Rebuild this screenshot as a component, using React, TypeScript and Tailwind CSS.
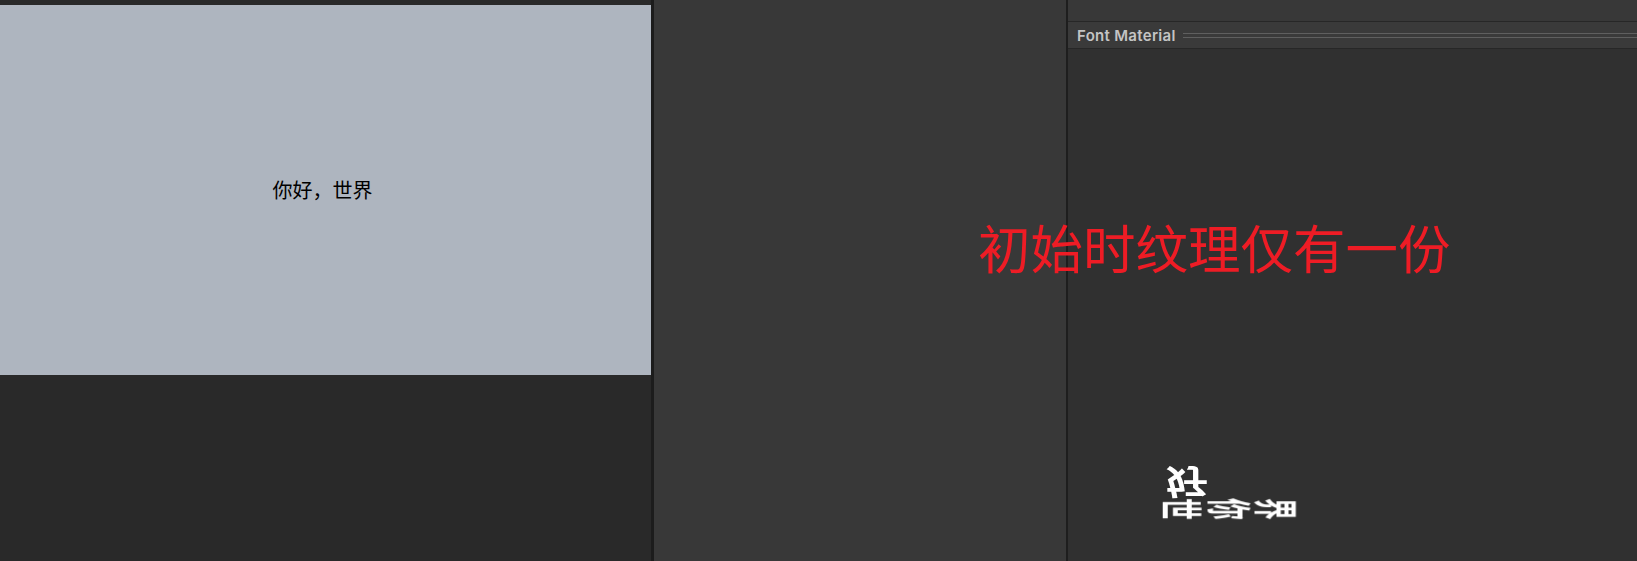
const cjk = "font-['Noto_Sans_CJK_SC','Noto_Sans_CJK_TC',sans-serif]";

function AtlasGlyph({ char, className }: { char: string; className: string }) {
  return <span className={`absolute leading-none font-bold text-white blur-[0.4px] ${cjk} ${className}`}>{char}</span>;
}

export default function App() {
  return (
    <div className="relative flex h-[561px] w-[1637px] overflow-hidden bg-[#292929]">
      {/* game view */}
      <div className="flex w-[651px] shrink-0 flex-col bg-[#292929] pt-[5px]">
        <div className="flex h-[370px] items-center justify-center bg-[#aeb5bf] pr-[6px]">
          <span className={`text-[20px] leading-none text-black ${cjk}`}>你好，世界</span>
        </div>
      </div>
      <div className="w-[3px] shrink-0 bg-[#1c1c1c]" />

      {/* middle panel */}
      <div className="w-[412px] shrink-0 bg-[#383838]" />
      <div className="w-[2px] shrink-0 bg-[#1e1e1e]" />

      {/* inspector */}
      <div className="flex flex-1 flex-col bg-[#303030]">
        <div className="h-[22px] border-b border-[#272727] bg-[#383838]" />
        <div className="flex h-[27px] items-center border-b border-[#272727] bg-[#3a3a3a] pl-[9px]">
          <span className="font-['Inter',sans-serif] text-[15px] leading-none font-semibold tracking-[0.3px] text-[#c4c4c4]">Font Material</span>
          <div className="ml-[7px] flex h-[5px] flex-1 flex-col justify-between">
            <div className="h-px bg-[#5f5f5f]" />
            <div className="h-px bg-[#5f5f5f]" />
          </div>
        </div>
      </div>

      {/* annotation over the screenshot */}
      <span className={`absolute top-[216px] left-[978px] text-[52.5px] leading-[60px] whitespace-nowrap text-[#ee1c25] ${cjk}`}>初始时纹理仅有一份</span>

      {/* font atlas, glyphs stored flipped and turned */}
      <AtlasGlyph char="好" className="top-[462px] left-[1166px] text-[42px] [transform:scaleY(-0.8)]" />
      <AtlasGlyph char="世" className="top-[494px] left-[1169px] text-[30px] [transform:scale(1.45,0.72)_rotate(90deg)]" />
      <AtlasGlyph char="你" className="top-[494px] left-[1216px] text-[30px] [transform:scale(1.5,0.72)_rotate(90deg)]" />
      <AtlasGlyph char="界" className="top-[494px] left-[1263px] text-[30px] [transform:scale(1.5,0.72)_rotate(90deg)]" />
    </div>
  );
}
